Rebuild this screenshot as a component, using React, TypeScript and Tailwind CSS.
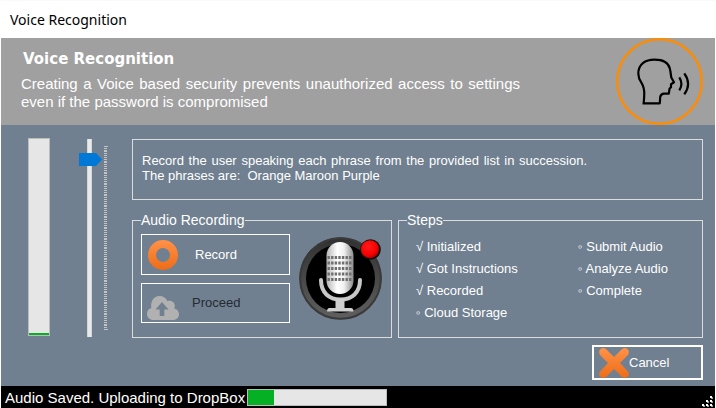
import React, { useState } from 'react';

const PHRASES = ['Orange', 'Maroon', 'Purple'];

const STEPS = [
  [
    { label: 'Initialized', done: true },
    { label: 'Got Instructions', done: true },
    { label: 'Recorded', done: true },
    { label: 'Cloud Storage', done: false },
  ],
  [
    { label: 'Submit Audio', done: false },
    { label: 'Analyze Audio', done: false },
    { label: 'Complete', done: false },
  ],
];

const TICK_COUNT = 101;

const SpeakingHead: React.FC = () => (
  <svg width="87" height="87" viewBox="0 0 87 87" fill="none" className="shrink-0" aria-hidden="true">
    <circle cx="43.5" cy="43.5" r="42.3" stroke="#ff8c00" strokeWidth="2.4" />
    <path
      d="M26.500 65.300H43.800L44.200 59Q44.800 55.800 48 55.600H52.800L53.600 50.500 55 49.200V46.200L58 44.300 55.300 39.500C54.800 36.500 54.600 33.500 53.800 30.500C52.300 24.500 46 21.700 38.500 21.700C29 21.700 22.400 26.500 22.300 35.500C22.300 39.500 23.500 42 25.500 44.800C28.200 49 28.600 53 28.200 58L27.700 65.300"
      stroke="#000"
      strokeWidth="2.2"
      strokeLinejoin="round"
    />
    <path d="M63.300 39.300q4.200 6.500 0 13M68.300 35.300q7.600 10.500 0 21" stroke="#000" strokeWidth="2.200" />
  </svg>
);

const RecordIcon: React.FC = () => (
  <svg width="30" height="30" viewBox="0 0 30 30" aria-hidden="true">
    <defs>
      <linearGradient id="ring" x1="0" y1="0" x2="0" y2="1">
        <stop offset="0" stopColor="#ff9248" />
        <stop offset="1" stopColor="#ee6c16" />
      </linearGradient>
    </defs>
    <path
      fill="url(#ring)"
      fillRule="evenodd"
      d="M15 0a15 15 0 1 0 0 30a15 15 0 1 0 0-30zM15 8a7 7 0 1 1 0 14a7 7 0 1 1 0-14z"
    />
  </svg>
);

const CloudIcon: React.FC = () => (
  <svg width="32" height="24" viewBox="0 0 32 24" aria-hidden="true">
    <path
      fill="#b1b1b1"
      d="M6.500 24C2.800 24 0 21.400 0 18c0-3 1.800-5.200 4.300-5.900C3.200 5.500 6.800 0 12.500 0c3.800 0 6.700 2 8 5.200 3.700-1.400 7.700 1.300 7.300 5.300-.1.800-.3 1.400-.6 2C30.200 13 32 15.300 32 18.200c0 3.300-2.600 5.800-6 5.800z"
    />
    <path fill="#708090" d="M15 6l6.500 7.500h-4.200V20h-4.600v-6.500H8.500z" />
  </svg>
);

const CancelIcon: React.FC = () => (
  <svg width="30" height="30" viewBox="0 0 30 30" aria-hidden="true">
    <defs>
      <linearGradient id="cross" x1="0" y1="0" x2="0" y2="30" gradientUnits="userSpaceOnUse">
        <stop offset="0" stopColor="#ff9248" />
        <stop offset="1" stopColor="#ee6c16" />
      </linearGradient>
    </defs>
    <path
      fill="url(#cross)"
      d="M1 1.500Q4-1 7 1l8 8 8-8q3-2 6 .5 2 3-.5 6L21 15l7.500 8q2.500 3 .5 5.500-3 2.500-6 .5l-8-8-8 8q-3 2-6-.5-2-2.500.500-5.500L9 15 1.500 7.500Q-1 4.500 1 1.500z"
    />
  </svg>
);

const Microphone: React.FC = () => (
  <svg width="84" height="84" viewBox="0 0 84 84" className="shrink-0" aria-hidden="true">
    <defs>
      <linearGradient id="rim" x1="0" y1="0" x2="0" y2="1">
        <stop offset="0" stopColor="#303030" />
        <stop offset="1" stopColor="#606060" />
      </linearGradient>
      <linearGradient id="capsule" x1="0" y1="0" x2="1" y2="0">
        <stop offset="0" stopColor="#b5b5b5" />
        <stop offset=".4" stopColor="#fff" />
        <stop offset=".65" stopColor="#f0f0f0" />
        <stop offset="1" stopColor="#8c8c8c" />
      </linearGradient>
      <radialGradient id="lamp" cx=".4" cy=".35" r=".65">
        <stop offset="0" stopColor="#ff1a1a" />
        <stop offset=".75" stopColor="#f60000" />
        <stop offset="1" stopColor="#b40000" />
      </radialGradient>
    </defs>
    <circle cx="41.500" cy="41.500" r="41.300" fill="url(#rim)" />
    <circle cx="41.500" cy="41.500" r="40.300" fill="none" stroke="#3a3a3a" strokeWidth="2" />
    <circle cx="41.500" cy="41.500" r="34.500" fill="#000" />
    <path d="M22 43c0 12.500 8 19.500 19.500 19.500S61 55.500 61 43" fill="none" stroke="#c8c8c8" strokeWidth="4" strokeLinecap="round" />
    <path d="M36.500 62h9v9h6.500q2.500 0 2.500 3.500H28q0-3.500 2.500-3.500h6z" fill="#d0d0d0" />
    <rect x="27.500" y="5" width="27" height="52" rx="13.500" fill="url(#capsule)" />
    <path
      d="M28.500 20.500h25M28.500 26h25M28.500 31.500h25M28.500 37h25M28.500 42.500h25"
      stroke="#6e6e6e"
      strokeWidth="3"
      strokeDasharray="2.400 1.200"
    />
    <circle cx="71.500" cy="12.500" r="10.300" fill="#111" />
    <circle cx="71" cy="12.200" r="9" fill="url(#lamp)" />
  </svg>
);

const TickMarks: React.FC = () => (
  <svg width="4" height="184" className="mt-[7px] shrink-0" shapeRendering="crispEdges" aria-hidden="true">
    {Array.from({ length: TICK_COUNT }, (_, i) => (
      <rect
        key={i}
        x="0"
        y={Math.round((i * 183) / (TICK_COUNT - 1))}
        width={i === 0 || i === TICK_COUNT - 1 ? 4 : 3}
        height="1"
        fill="#c4c4c4"
      />
    ))}
  </svg>
);

const SizeGrip: React.FC = () => (
  <svg width="11" height="11" viewBox="0 0 11 11" className="mb-px self-end" shapeRendering="crispEdges" aria-hidden="true">
    <path fill="#fff" d="M8 0h2v2h-2zM4 4h2v2h-2zM8 4h2v2h-2zM0 8h2v2h-2zM4 8h2v2h-2zM8 8h2v2h-2z" />
    <path fill="#999" d="M10 1h1v2h-2v-1h1zM6 5h1v2h-2v-1h1zM10 5h1v2h-2v-1h1zM2 9h1v2h-2v-1h1zM6 9h1v2h-2v-1h1zM10 9h1v2h-2v-1h1z" />
  </svg>
);

const App: React.FC = () => {
  const [volume, setVolume] = useState(171);

  return (
    <div className="flex min-h-screen flex-col border-x border-white bg-[#708090] font-['Liberation_Sans',Arial,sans-serif] text-[13px] leading-4 text-white">
      {/* Title bar */}
      <div className="flex h-[38px] items-center border-t border-gray-50 bg-white px-[9px] font-['Noto_Sans','Open_Sans',sans-serif] text-[14px] text-black">
        Voice Recognition
      </div>

      {/* Banner */}
      <header className="flex h-[87px] items-center justify-between bg-[#a0a0a0] pr-3 pl-5">
        <div className="w-[499px] pb-1">
          <h1 className="pl-0.5 font-['DejaVu_Sans',Verdana,sans-serif] text-[15px] leading-5 font-bold">
            Voice Recognition
          </h1>
          <p className="mt-1.5 text-justify text-[15px] leading-[18px]">
            Creating a Voice based security prevents unauthorized access to settings even if the
            password is compromised
          </p>
        </div>
        <SpeakingHead />
      </header>

      <main className="flex flex-1 items-start pt-[13px] pr-3 pb-1.5 pl-[27px]">
        {/* Input level */}
        <progress
          aria-label="Input level"
          value={1}
          max={100}
          className="h-[198px] w-[22px] shrink-0 appearance-none border border-[#bcbcbc] [direction:rtl] [writing-mode:vertical-lr] [&::-webkit-progress-bar]:bg-[#e6e6e6] [&::-webkit-progress-value]:bg-[#06b025]"
        />

        {/* Volume */}
        <div className="mt-px ml-[29px] flex shrink-0 items-start gap-0.5">
          <input
            type="range"
            aria-label="Volume"
            min={0}
            max={185}
            value={volume}
            onChange={(e) => setVolume(Number(e.target.value))}
            className="h-[198px] w-[23px] appearance-none bg-[linear-gradient(90deg,transparent_8px,#d6d6d6_8px,#d6d6d6_9px,#e7eaea_9px,#e7eaea_12px,#d6d6d6_12px,#d6d6d6_13px,transparent_13px)] [direction:rtl] [writing-mode:vertical-lr] [&::-webkit-slider-thumb]:h-[13px] [&::-webkit-slider-thumb]:w-[23px] [&::-webkit-slider-thumb]:appearance-none [&::-webkit-slider-thumb]:bg-[#0078d7] [&::-webkit-slider-thumb]:[clip-path:polygon(0_0,17px_0,100%_50%,17px_100%,0_100%)]"
          />
          <TickMarks />
        </div>

        <div className="mt-px ml-6 flex min-w-0 flex-1 flex-col">
          <section className="h-[61px] border border-[#dcdcdc] px-[9px] pt-[13px]">
            <p className="w-[445px] text-justify leading-[15px]">
              {`Record the user speaking each phrase from the provided list in succession. The phrases are:\u00a0 ${PHRASES.join(' ')}`}
            </p>
          </section>

          <div className="mt-3 flex gap-1.5">
            <fieldset className="h-[126px] w-[260px] shrink-0 border border-[#dcdcdc] px-2">
              <legend className="text-[14px]">Audio Recording</legend>
              <div className="flex items-center gap-[9px] pt-1.5">
                <div className="flex w-[149px] flex-col gap-2">
                  <button type="button" className="flex h-[41px] items-center border border-white pl-1.5">
                    <RecordIcon />
                    <span className="ml-[17px]">Record</span>
                  </button>
                  <button
                    type="button"
                    disabled
                    className="flex h-10 items-center border border-white pl-[5px] text-[#252a30]"
                  >
                    <span className="pt-2.5">
                      <CloudIcon />
                    </span>
                    <span className="ml-[13px]">Proceed</span>
                  </button>
                </div>
                <Microphone />
              </div>
            </fieldset>

            <fieldset className="h-[126px] min-w-0 flex-1 border border-[#dcdcdc] px-2">
              <legend className="text-[14px]">Steps</legend>
              <div className="flex pt-2 pl-[9px] leading-[22px]">
                {STEPS.map((column, index) => (
                  <ul key={index} className="first:w-[162px] first:shrink-0">
                    {column.map((step) => (
                      <li key={step.label} className="whitespace-nowrap">
                        {`${step.done ? '√' : '◦'} ${step.label}`}
                      </li>
                    ))}
                  </ul>
                ))}
              </div>
            </fieldset>
          </div>

          <button
            type="button"
            className="mt-[7px] flex h-[35px] w-[111px] items-center self-end border-2 border-white pl-[5px]"
          >
            <CancelIcon />
            Cancel
          </button>
        </div>
      </main>

      {/* Status bar */}
      <footer className="flex h-[22px] items-center bg-black pr-0.5 pl-1 text-[15px]">
        <span className="w-[242px] pt-0.5">Audio Saved. Uploading to DropBox</span>
        <progress
          aria-label="Upload progress"
          value={19}
          max={100}
          className="h-[17px] w-[140px] appearance-none border border-[#bcbcbc] [&::-webkit-progress-bar]:bg-[#e6e6e6] [&::-webkit-progress-value]:bg-[#06b025]"
        />
        <span className="ml-auto flex self-end">
          <SizeGrip />
        </span>
      </footer>
    </div>
  );
};

export default App;
